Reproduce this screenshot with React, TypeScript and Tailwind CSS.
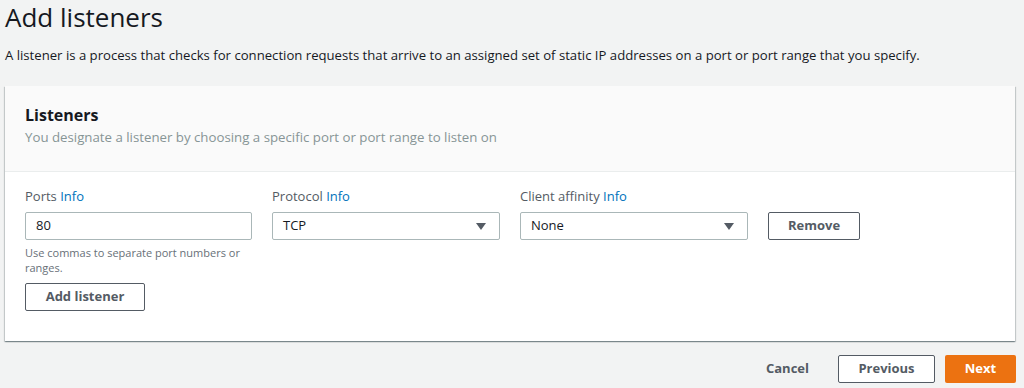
import React from 'react'

const Caret = () => (
  <svg width="10" height="7" viewBox="0 0 10 7" className="shrink-0">
    <path d="M0 0 H10 L5 7 Z" fill="#545b64" />
  </svg>
)

const Label = ({ text }: { text: string }) => (
  <div className="text-[13px] leading-[16px] text-[#545b64] mb-[8px]">
    {text} <span className="text-[#0073bb]">Info</span>
  </div>
)

const Select = ({ value }: { value: string }) => (
  <div className="flex items-center justify-between w-[228px] h-[28px] border border-[#aab7b8] rounded-[2px] bg-white pl-[10px] pr-[13px] text-[13px] text-[#16191f]">
    <span>{value}</span>
    <Caret />
  </div>
)

const App = () => {
  return (
    <div className="w-[1024px] h-[388px] overflow-hidden bg-[#f2f3f3] px-[5px] pt-[2px] font-['Open_Sans',sans-serif] text-[#16191f]">
      {/* Page header */}
      <h1 className="text-[26px] leading-[30px] h-[24px]">Add listeners</h1>
      <p className="text-[13.15px] leading-[18px] mt-[20px]">
        A listener is a process that checks for connection requests that arrive to an assigned set of static IP addresses on a port or port range that you specify.
      </p>

      {/* Listeners card */}
      <div className="mt-[22px] w-[1010px] h-[255px] bg-white shadow-[0_1px_1px_0_rgba(0,28,36,0.3),1px_1px_1px_0_rgba(0,28,36,0.15),-1px_1px_1px_0_rgba(0,28,36,0.15)]">
        <div className="h-[86px] bg-[#fafafa] border-b border-[#eaeded] px-[20px] pt-[18px]">
          <h2 className="text-[16px] leading-[22px] font-bold">Listeners</h2>
          <p className="text-[13.25px] leading-[18px] text-[#879596] mt-[2px]">
            You designate a listener by choosing a specific port or port range to listen on
          </p>
        </div>

        <div className="px-[20px] pt-[16px]">
          <div className="flex gap-[20px]">
            <div className="w-[227px]">
              <Label text="Ports" />
              <div className="w-[227px] h-[28px] border border-[#aab7b8] rounded-[2px] bg-white px-[10px] flex items-center text-[13px]">
                80
              </div>
              <p className="text-[11px] leading-[15px] text-[#687078] mt-[5px]">
                Use commas to separate port numbers or ranges.
              </p>
              <button className="mt-[8px] w-[120px] h-[28px] border border-[#545b64] rounded-[2px] bg-white text-[13px] font-bold text-[#545b64]">
                Add listener
              </button>
            </div>
            <div>
              <Label text="Protocol" />
              <Select value="TCP" />
            </div>
            <div>
              <Label text="Client affinity" />
              <Select value="None" />
            </div>
            <div className="pt-[24px]">
              <button className="w-[92px] h-[28px] border border-[#545b64] rounded-[2px] bg-white text-[13px] font-bold text-[#545b64]">
                Remove
              </button>
            </div>
          </div>
        </div>
      </div>

      {/* Footer actions */}
      <div className="flex justify-end items-center mt-[14px] w-[1011px]">
        <button className="text-[13px] font-bold text-[#545b64] mr-[29px]">Cancel</button>
        <button className="w-[97px] h-[28px] border border-[#545b64] rounded-[2px] bg-white text-[13px] font-bold text-[#545b64] mr-[10px]">
          Previous
        </button>
        <button className="w-[71px] h-[28px] rounded-[2px] bg-[#ec7211] text-[13px] font-bold text-white">
          Next
        </button>
      </div>
    </div>
  )
}

export default App
